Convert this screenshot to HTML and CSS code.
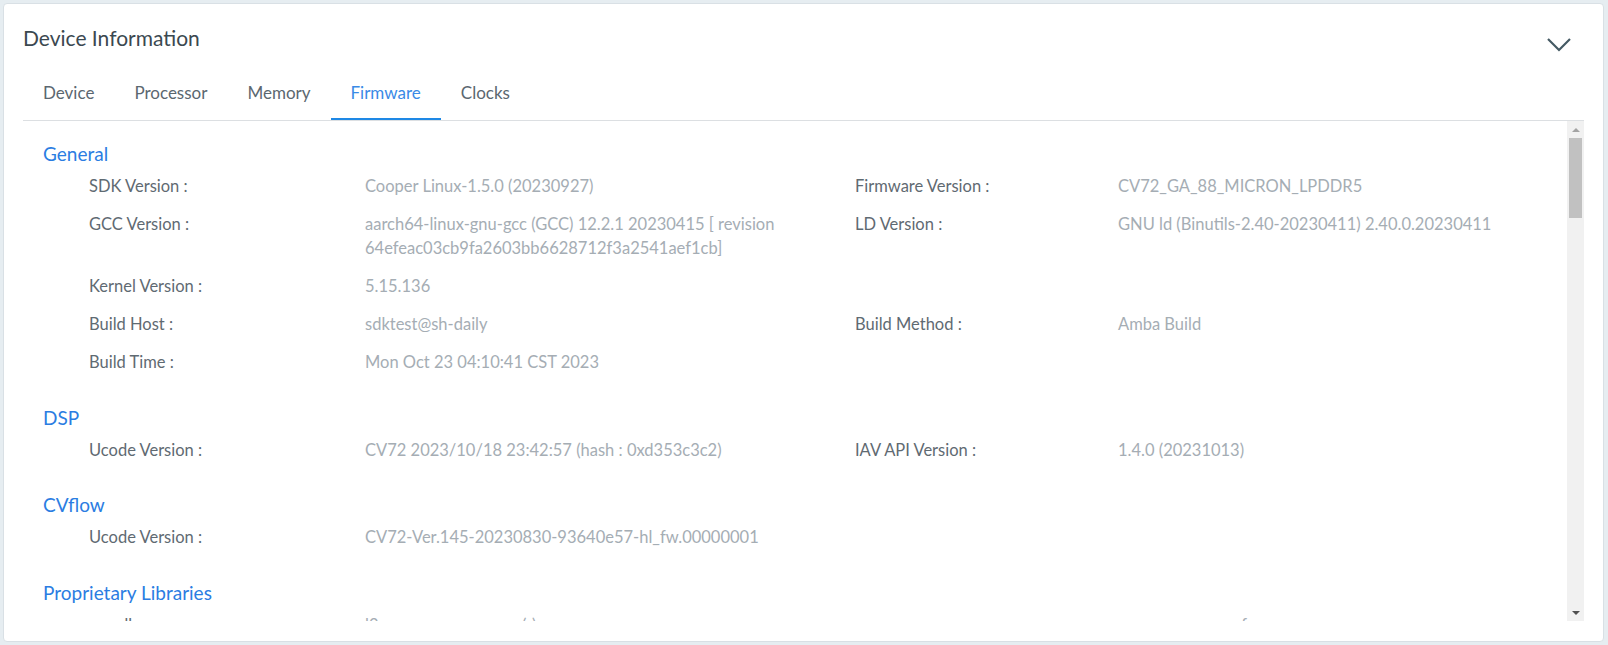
FILE: index.html
```html
<!DOCTYPE html>
<html lang="en">
<head>
<meta charset="utf-8">
<title>Device Information</title>
<link rel="stylesheet" href="styles.css">
</head>
<body>
<div class="card">
  <div class="card-header">
    <h2 class="title">Device Information</h2>
    <button class="collapse" aria-label="Collapse">
      <svg width="24" height="24" viewBox="0 0 24 24"><path d="M1 7 L12 18 L23 7" fill="none" stroke="#455a64" stroke-width="2.2"/></svg>
    </button>
  </div>
  <nav class="tabs">
    <a class="tab">Device</a>
    <a class="tab">Processor</a>
    <a class="tab">Memory</a>
    <a class="tab active">Firmware</a>
    <a class="tab">Clocks</a>
  </nav>
  <div class="scroll-wrap">
    <div class="scroll-content">
      <section class="section">
        <h3 class="section-title">General</h3>
        <div class="kv">
          <div class="row"><span>SDK Version :</span><span>Cooper Linux-1.5.0 (20230927)</span><span>Firmware Version :</span><span>CV72_GA_88_MICRON_LPDDR5</span></div>
          <div class="row"><span>GCC Version :</span><span>aarch64-linux-gnu-gcc (GCC) 12.2.1 20230415 [ revision 64efeac03cb9fa2603bb6628712f3a2541aef1cb]</span><span>LD Version :</span><span>GNU ld (Binutils-2.40-20230411) 2.40.0.20230411</span></div>
          <div class="row"><span>Kernel Version :</span><span>5.15.136</span></div>
          <div class="row"><span>Build Host :</span><span>sdktest@sh-daily</span><span>Build Method :</span><span>Amba Build</span></div>
          <div class="row"><span>Build Time :</span><span>Mon Oct 23 04:10:41 CST 2023</span></div>
        </div>
      </section>
      <section class="section">
        <h3 class="section-title">DSP</h3>
        <div class="kv">
          <div class="row"><span>Ucode Version :</span><span>CV72 2023/10/18 23:42:57 (hash : 0xd353c3c2)</span><span>IAV API Version :</span><span>1.4.0 (20231013)</span></div>
        </div>
      </section>
      <section class="section">
        <h3 class="section-title">CVflow</h3>
        <div class="kv">
          <div class="row"><span>Ucode Version :</span><span>CV72-Ver.145-20230830-93640e57-hl_fw.00000001</span></div>
        </div>
      </section>
      <section class="section">
        <h3 class="section-title">Proprietary Libraries</h3>
        <div class="kv">
          <div class="row"><span>nmsdk :</span><span>l2 arm cv_nn_run_srv (r) ver</span><span>nnmx :</span><span>v a runner arm ref</span></div>
          <div class="row"><span>libdatatx.so :</span><span>1.0.0 (20230830)</span><span>libeazyai.so :</span><span>2.1.0 (20231011)</span></div>
          <div class="row"><span>libimg_algo.so :</span><span>5.3.0 (20231016)</span><span>libimg_dsp.so :</span><span>5.3.0 (20231016)</span></div>
          <div class="row"><span>libimg_aaa.so :</span><span>5.3.0 (20231016)</span><span>libimg_ae.so :</span><span>5.3.0 (20231016)</span></div>
          <div class="row"><span>libamba_iav.so :</span><span>1.4.0 (20231013)</span><span>libamba_vin.so :</span><span>1.4.0 (20231013)</span></div>
          <div class="row"><span>libcavalry.so :</span><span>2.1.4 (20230830)</span><span>libcavalry_mem.so :</span><span>2.1.4 (20230830)</span></div>
          <div class="row"><span>libvproc.so :</span><span>1.2.0 (20230830)</span><span>libnnctrl.so :</span><span>1.6.2 (20230830)</span></div>
          <div class="row"><span>libsmartrc.so :</span><span>3.2.1 (20231012)</span><span>libmdet.so :</span><span>1.1.0 (20230915)</span></div>
        </div>
      </section>
    </div>
    <div class="scrollbar" aria-hidden="true">
      <div class="sb-btn sb-up"></div>
      <div class="sb-track"><div class="sb-thumb"></div></div>
      <div class="sb-btn sb-down"></div>
    </div>
  </div>
</div>
</body>
</html>
```
FILE: styles.css
```css
* { box-sizing: border-box; }
html, body { margin: 0; }
body {
  background: #e6edf1;
  padding: 3px 4px 3px 3px;
  font-family: Lato, "Noto Sans", sans-serif;
}
.card {
  background: #fff;
  border: 1px solid #d9e0e5;
  border-radius: 4px;
  padding: 20px 19px 20px 19px;
}
.card-header {
  display: flex;
  justify-content: space-between;
  align-items: flex-start;
  margin-bottom: 21px;
}
.title {
  margin: 0;
  font-size: 21px;
  line-height: 28px;
  font-weight: 400;
  color: #3b4850;
}
.collapse {
  display: block;
  margin: 8px 13px -4px 0;
  padding: 0;
  border: 0;
  background: none;
  width: 24px;
  height: 24px;
}
.collapse svg { display: block; }
.tabs {
  display: flex;
  border-bottom: 1px solid #dcdfe2;
}
.tab {
  display: block;
  padding: 8px 20px 15px;
  font-size: 17px;
  line-height: 24px;
  color: #5b6770;
}
.tab.active {
  color: #3a8ae6;
  box-shadow: inset 0 -2px 0 #1e88e5;
}
.scroll-wrap {
  display: flex;
  height: 500px;
}
.scroll-content {
  flex: 1;
  min-width: 0;
  overflow: hidden;
  padding-left: 20px;
}
.scrollbar {
  width: 17px;
  display: flex;
  flex-direction: column;
  background: #f1f1f1;
}
.sb-btn {
  height: 17px;
  display: flex;
  align-items: center;
  justify-content: center;
}
.sb-btn::before {
  content: "";
  width: 0;
  height: 0;
  border-left: 4px solid transparent;
  border-right: 4px solid transparent;
}
.sb-up::before { border-bottom: 4px solid #a3a3a3; }
.sb-down::before { border-top: 4px solid #505050; }
.sb-track { flex: 1; }
.sb-thumb {
  height: 80px;
  margin: 0 2px;
  background: #c1c1c1;
}
.section-title {
  margin: 23.5px 0 0;
  font-size: 19px;
  line-height: 26px;
  font-weight: 400;
  color: #2b7de2;
}
.section:first-child .section-title { margin-top: 20px; }
.kv { margin-left: 46px; }
.row {
  display: grid;
  grid-template-columns: 276px 490px 263px 1fr;
  padding: 7px 0;
  font-size: 16.5px;
  line-height: 24px;
}
.row span { padding-right: 12px; }
.row span:nth-child(odd) { color: #5f6a72; }
.row span:nth-child(even) { color: #a5adb4; }
```
